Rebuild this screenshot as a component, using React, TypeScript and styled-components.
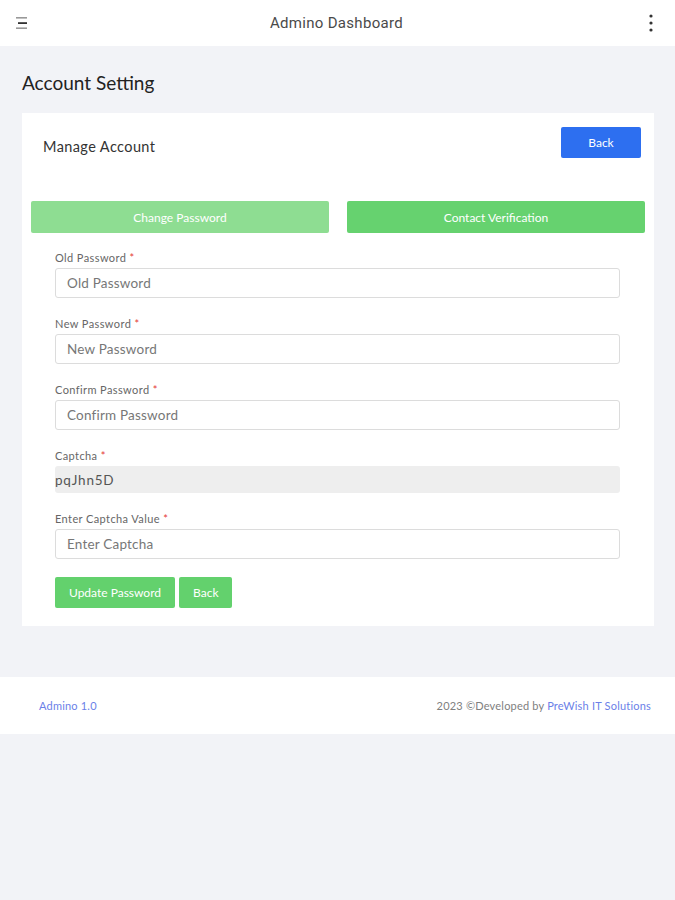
import React from 'react'
import styled, { createGlobalStyle } from 'styled-components'

const GlobalStyle = createGlobalStyle`
  html, body {
    margin: 0;
    padding: 0;
    background: #f2f3f7;
    font-family: 'Lato', 'Open Sans', sans-serif;
  }
  * { box-sizing: border-box; }
`

const Page = styled.div`
  width: 675px;
  min-height: 900px;
  background: #f2f3f7;
`

const TopBar = styled.header`
  height: 46px;
  background: #ffffff;
  display: flex;
  align-items: center;
  justify-content: space-between;
  padding: 0 16px 0 14px;
`

const BarTitle = styled.div`
  font-family: 'Roboto', sans-serif;
  font-size: 15px;
  color: #4a4a4a;
  letter-spacing: 0.3px;
`

const IconBox = styled.div`
  width: 16px;
  height: 20px;
  display: flex;
  align-items: center;
  justify-content: center;
`

const Main = styled.main`
  padding: 25px 21px 51px 22px;
`

const PageTitle = styled.h1`
  margin: 0 0 18px 0;
  font-family: 'Lato', sans-serif;
  font-weight: 400;
  font-size: 19px;
  line-height: 24px;
  color: #222;
`

const Card = styled.section`
  background: #fff;
  padding: 14px 9px 18px 9px;
`

const CardHeader = styled.div`
  display: flex;
  align-items: center;
  justify-content: space-between;
  padding: 0 4px 0 12px;
  height: 31px;
  margin-bottom: 43px;
`

const CardTitle = styled.div`
  font-size: 14.5px;
  color: #333;
  letter-spacing: 0.4px;
  margin-top: 7px;
`

const Button = styled.button<{ $variant?: 'blue' | 'green' }>`
  border: none;
  border-radius: 2px;
  font-family: 'Lato', sans-serif;
  font-size: 12px;
  color: #fff;
  cursor: pointer;
  background: ${p => (p.$variant === 'blue' ? '#2d6ff0' : '#63d16d')};
  height: 31px;
  padding: 0 14px;
`

const Tabs = styled.div`
  display: grid;
  grid-template-columns: 1fr 1fr;
  gap: 18px;
  margin-bottom: 19px;
`

const Tab = styled.button<{ $active?: boolean }>`
  height: 32px;
  border: none;
  border-radius: 2px;
  font-family: 'Lato', sans-serif;
  font-size: 12px;
  color: #fff;
  background: ${p => (p.$active ? '#8edd92' : '#66d26f')};
`

const Form = styled.div`
  padding: 0 25px 0 24px;
  display: flex;
  flex-direction: column;
`

const Field = styled.div`
  margin-bottom: 20px;
`

const Label = styled.label`
  display: block;
  font-size: 11px;
  letter-spacing: 0.4px;
  color: #666;
  margin-bottom: 4px;
  line-height: 12px;

  span {
    color: #e53935;
  }
`

const Input = styled.input`
  display: block;
  width: 100%;
  height: 30px;
  border: 1px solid #dcdcdc;
  border-radius: 3px;
  padding: 0 11px;
  font-family: 'Lato', sans-serif;
  font-size: 13.5px;
  letter-spacing: 0.2px;
  color: #555;
  background: #fff;
  outline: none;

  &::placeholder {
    color: #777;
  }
`

const ReadOnlyBox = styled.div`
  height: 27px;
  background: #eeeeee;
  border-radius: 3px;
  display: flex;
  align-items: center;
  font-size: 13.5px;
  color: #555;
  letter-spacing: 0.8px;
`

const Actions = styled.div`
  display: flex;
  gap: 4px;
  margin-top: -2px;
`

const Footer = styled.footer`
  height: 57px;
  background: #fff;
  display: flex;
  align-items: center;
  justify-content: space-between;
  padding: 0 24px 0 39px;
  font-size: 11px;
  letter-spacing: 0.2px;
`

const FooterLink = styled.span`
  color: #6b7fe8;
`

const FooterText = styled.span`
  color: #808080;
`

const MenuIcon = () => (
  <svg width="14" height="14" viewBox="0 0 14 14">
    <rect x="1" y="1" width="11" height="1.6" fill="#999" />
    <rect x="3" y="6.2" width="9" height="1.8" fill="#333" />
    <rect x="1" y="11.4" width="11" height="1.6" fill="#999" />
  </svg>
)

const KebabIcon = () => (
  <svg width="4" height="18" viewBox="0 0 4 18">
    <circle cx="2" cy="2" r="1.6" fill="#333" />
    <circle cx="2" cy="9" r="1.6" fill="#333" />
    <circle cx="2" cy="16" r="1.6" fill="#333" />
  </svg>
)

const fields = [
  { label: 'Old Password', placeholder: 'Old Password' },
  { label: 'New Password', placeholder: 'New Password' },
  { label: 'Confirm Password', placeholder: 'Confirm Password' },
]

export default function App() {
  return (
    <Page>
      <GlobalStyle />
      <TopBar>
        <IconBox><MenuIcon /></IconBox>
        <BarTitle>Admino Dashboard</BarTitle>
        <IconBox><KebabIcon /></IconBox>
      </TopBar>
      <Main>
        <PageTitle>Account Setting</PageTitle>
        <Card>
          <CardHeader>
            <CardTitle>Manage Account</CardTitle>
            <Button $variant="blue" style={{ width: 80 }}>Back</Button>
          </CardHeader>
          <Tabs>
            <Tab $active>Change Password</Tab>
            <Tab>Contact Verification</Tab>
          </Tabs>
          <Form>
            {fields.map(f => (
              <Field key={f.label}>
                <Label>{f.label} <span>*</span></Label>
                <Input placeholder={f.placeholder} />
              </Field>
            ))}
            <Field>
              <Label>Captcha <span>*</span></Label>
              <ReadOnlyBox>pqJhn5D</ReadOnlyBox>
            </Field>
            <Field>
              <Label>Enter Captcha Value <span>*</span></Label>
              <Input placeholder="Enter Captcha" />
            </Field>
            <Actions>
              <Button>Update Password</Button>
              <Button>Back</Button>
            </Actions>
          </Form>
        </Card>
      </Main>
      <Footer>
        <FooterLink>Admino 1.0</FooterLink>
        <FooterText>2023 ©Developed by <FooterLink>PreWish IT Solutions</FooterLink></FooterText>
      </Footer>
    </Page>
  )
}
